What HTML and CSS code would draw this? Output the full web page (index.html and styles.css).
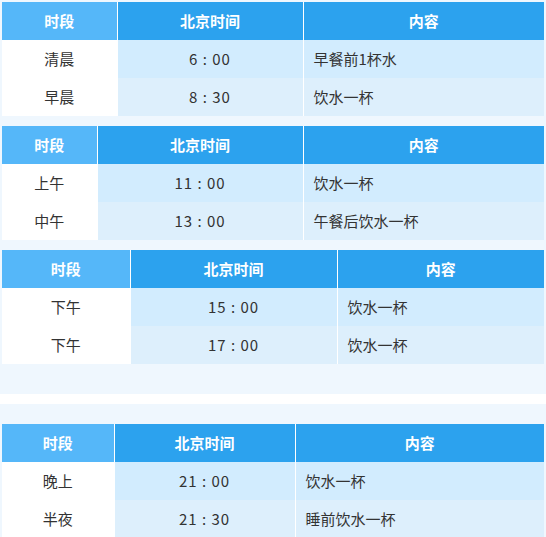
FILE: index.html
```html
<!DOCTYPE html>
<html lang="zh-CN">
<head>
<meta charset="utf-8">
<title>饮水时间表</title>
<link rel="stylesheet" href="styles.css">
</head>
<body>
<section class="block block-top">
  <table class="sched t1">
    <colgroup><col class="c1"><col class="c2"><col class="c3"></colgroup>
    <thead><tr><th class="h1">时段</th><th>北京时间</th><th>内容</th></tr></thead>
    <tbody>
      <tr><td class="period">清晨</td><td class="time">6 : 00</td><td class="note">早餐前1杯水</td></tr>
      <tr><td class="period">早晨</td><td class="time">8 : 30</td><td class="note">饮水一杯</td></tr>
    </tbody>
  </table>
  <table class="sched t2">
    <colgroup><col class="c1"><col class="c2"><col class="c3"></colgroup>
    <thead><tr><th class="h1">时段</th><th>北京时间</th><th>内容</th></tr></thead>
    <tbody>
      <tr><td class="period">上午</td><td class="time">11 : 00</td><td class="note">饮水一杯</td></tr>
      <tr><td class="period">中午</td><td class="time">13 : 00</td><td class="note">午餐后饮水一杯</td></tr>
    </tbody>
  </table>
  <table class="sched t3">
    <colgroup><col class="c1"><col class="c2"><col class="c3"></colgroup>
    <thead><tr><th class="h1">时段</th><th>北京时间</th><th>内容</th></tr></thead>
    <tbody>
      <tr><td class="period">下午</td><td class="time">15 : 00</td><td class="note">饮水一杯</td></tr>
      <tr><td class="period">下午</td><td class="time">17 : 00</td><td class="note">饮水一杯</td></tr>
    </tbody>
  </table>
</section>
<section class="block block-bottom">
  <table class="sched t4">
    <colgroup><col class="c1"><col class="c2"><col class="c3"></colgroup>
    <thead><tr><th class="h1">时段</th><th>北京时间</th><th>内容</th></tr></thead>
    <tbody>
      <tr><td class="period">晚上</td><td class="time">21 : 00</td><td class="note">饮水一杯</td></tr>
      <tr><td class="period">半夜</td><td class="time">21 : 30</td><td class="note">睡前饮水一杯</td></tr>
    </tbody>
  </table>
</section>
</body>
</html>
```

FILE: styles.css
```css
html, body {
  margin: 0;
  padding: 0;
  background: #ffffff;
}

body {
  font-family: "Noto Sans CJK SC", "Noto Sans", sans-serif;
  font-size: 15px;
  color: #333333;
}

.block {
  background: #eff7fe;
  padding: 2px 2px 0 2px;
  display: flex;
  flex-direction: column;
  gap: 10px;
}

.block-top {
  padding-bottom: 30px;
}

.block-bottom {
  margin-top: 10px;
  padding-top: 20px;
}

.sched {
  width: 542px;
  border-collapse: collapse;
  table-layout: fixed;
}

.sched th,
.sched td {
  height: 38px;
  padding: 0;
  box-sizing: border-box;
  border-left: 1px solid #ffffff;
  vertical-align: middle;
  line-height: 20px;
}

.sched th:first-child,
.sched td:first-child {
  border-left: none;
}

.sched th {
  background: #2ca2ee;
  color: #ffffff;
  font-weight: bold;
  text-align: center;
}

.sched th.h1 {
  background: #55b7f9;
}

.period {
  background: #ffffff;
  text-align: center;
}

.time {
  text-align: center;
  letter-spacing: 1px;
  white-space: pre;
}

.note {
  text-align: left;
  padding-left: 10px !important;
}

.sched tbody tr:nth-child(1) .time,
.sched tbody tr:nth-child(1) .note {
  background: #d2ecfe;
}

.sched tbody tr:nth-child(2) .time,
.sched tbody tr:nth-child(2) .note {
  background: #ddeffc;
}

.t1 .c1 { width: 115px; }
.t1 .c2 { width: 186px; }
.t1 .c3 { width: 241px; }

.t2 .c1 { width: 95px; }
.t2 .c2 { width: 206px; }
.t2 .c3 { width: 241px; }

.t3 .c1 { width: 128px; }
.t3 .c2 { width: 207px; }
.t3 .c3 { width: 207px; }

.t4 .c1 { width: 112px; }
.t4 .c2 { width: 181px; }
.t4 .c3 { width: 249px; }
```
